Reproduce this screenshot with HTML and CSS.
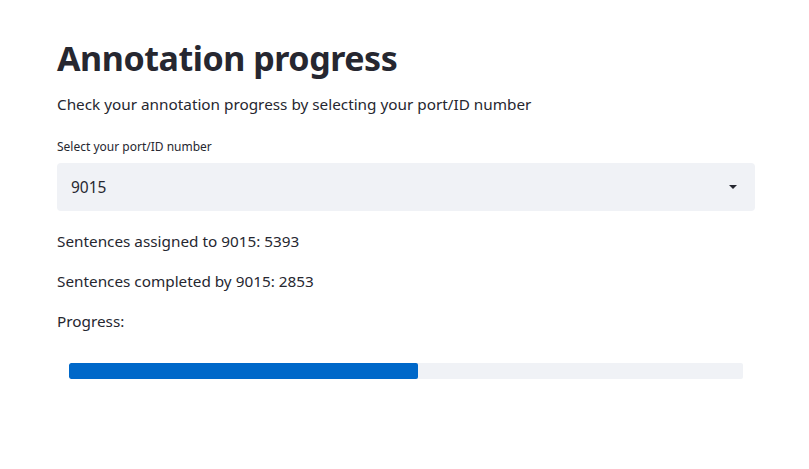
FILE: index.html
```html
<!DOCTYPE html>
<html>
<head>
<meta charset="utf-8">
<link rel="stylesheet" href="styles.css">
</head>
<body>
<main class="main">
  <h1 class="title">Annotation progress</h1>
  <p class="intro">Check your annotation progress by selecting your port/ID number</p>
  <div class="field">
    <label class="field-label">Select your port/ID number</label>
    <div class="select">
      <span class="select-value">9015</span>
      <svg class="caret" width="10" height="6" viewBox="0 0 10 6"><path d="M1 1h8L5 5z" fill="#262730"/></svg>
    </div>
  </div>
  <p class="stat">Sentences assigned to 9015: 5393</p>
  <p class="stat">Sentences completed by 9015: 2853</p>
  <p class="stat">Progress:</p>
  <div class="progress">
    <div class="track"><div class="fill" style="width: 51.8%"></div></div>
  </div>
</main>
</body>
</html>
```
FILE: styles.css
```css
html, body {
  margin: 0;
  padding: 0;
  background: #ffffff;
}
body {
  font-family: "Noto Sans", "Liberation Sans", sans-serif;
  color: #262730;
}
.main {
  width: 698px;
  padding: 30px 0 0 57px;
  display: flex;
  flex-direction: column;
}
.title {
  margin: 0;
  font-size: 34px;
  font-weight: 700;
  line-height: 56px;
  letter-spacing: -0.45px;
}
.intro {
  margin: 6px 0 0;
  font-size: 15.3px;
  line-height: 24px;
}
.field {
  margin-top: 21px;
  display: flex;
  flex-direction: column;
}
.field-label {
  font-size: 12px;
  line-height: 20px;
  margin-bottom: 6px;
}
.select {
  height: 48px;
  background: #f0f2f6;
  border-radius: 4px;
  display: flex;
  align-items: center;
  justify-content: space-between;
  padding: 0 17px 0 14px;
}
.select-value {
  font-size: 15.5px;
}
.stat {
  margin: 16px 0 0;
  font-size: 15.3px;
  line-height: 24px;
}
.field + .stat {
  margin-top: 18px;
}
.progress {
  margin-top: 30px;
  padding: 0 12px;
}
.track {
  height: 16px;
  background: #f0f2f6;
  border-radius: 2px;
  overflow: hidden;
}
.fill {
  height: 100%;
  background: #0068c9;
  border-radius: 2px;
}
```
